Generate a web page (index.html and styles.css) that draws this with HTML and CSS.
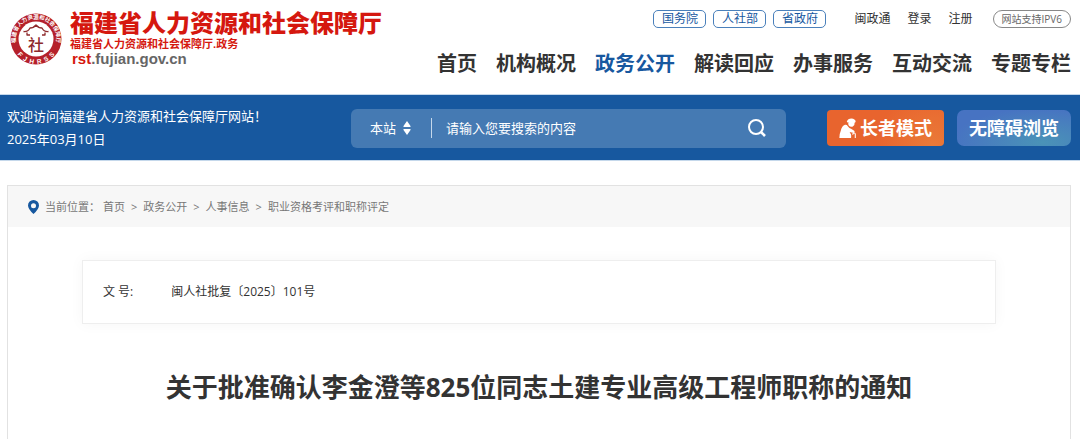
FILE: index.html
```html
<!DOCTYPE html>
<html lang="zh-CN">
<head>
    <meta charset="utf-8">
    <meta name="viewport" content="width=device-width, initial-scale=1">
    <title>福建省人力资源和社会保障厅</title>
    <link rel="stylesheet" href="styles.css">
</head>
<body>
<header class="header">
    <a class="logo" href="#">
        <svg class="logo_seal" viewBox="0 0 104 104" aria-hidden="true">
            <defs>
                <path id="arc_top" d="M15 70 A41 41 0 1 1 89 70"/>
                <path id="arc_bottom" d="M6 56 A46 46 0 0 0 98 56"/>
            </defs>
            <circle cx="52" cy="52" r="51" fill="#b5202a"/>
            <circle cx="52" cy="52" r="35" fill="#fff"/>
            <text class="seal_cn"><textPath href="#arc_top" startOffset="50%">福建省人力资源和社会保障厅</textPath></text>
            <text class="seal_en"><textPath href="#arc_bottom" startOffset="50%">F&nbsp; J&nbsp; H&nbsp; R&nbsp; S&nbsp; S</textPath></text>
            <path d="M27 37 Q36 38 40 30 Q47 30 52 24 Q57 30 64 30 Q68 38 77 37 M34 39 V44 H40 M70 39 V44 H64" fill="none" stroke="#8e2a2c" stroke-width="2.6" stroke-linejoin="round"/>
            <text class="seal_mid" x="52" y="75">社</text>
        </svg>
        <span class="logo_text">
            <strong class="logo_name">福建省人力资源和社会保障厅</strong>
            <span class="logo_sub">福建省人力资源和社会保障厅.政务</span>
            <span class="logo_url"><em>rst</em>.fujian.gov.cn</span>
        </span>
    </a>
    <div class="header_right">
        <div class="toplinks">
            <div class="gov">
                <a href="#">国务院</a>
                <a href="#">人社部</a>
                <a href="#">省政府</a>
            </div>
            <div class="user">
                <a href="#">闽政通</a>
                <a href="#">登录</a>
                <a href="#">注册</a>
            </div>
            <a class="ipv6" href="#">网站支持IPV6</a>
        </div>
        <nav class="nav">
            <a href="#">首页</a>
            <a href="#">机构概况</a>
            <a class="current" href="#">政务公开</a>
            <a href="#">解读回应</a>
            <a href="#">办事服务</a>
            <a href="#">互动交流</a>
            <a href="#">专题专栏</a>
        </nav>
    </div>
</header>

<section class="banner">
    <div class="welcome">
        <p>欢迎访问福建省人力资源和社会保障厅网站！</p>
        <p>2025年03月10日</p>
    </div>
    <form class="search">
        <span class="scope">
            <select aria-label="搜索范围">
                <option>本站</option>
            </select>
            <svg viewBox="0 0 8 14" aria-hidden="true"><path d="M4 0 L7.5 5 Q8 6 7 6 H1 Q0 6 .5 5 Z M4 14 L.5 9 Q0 8 1 8 H7 Q8 8 7.5 9 Z" fill="#fff"/></svg>
        </span>
        <input class="keyword" type="text" aria-label="搜索内容" placeholder="请输入您要搜索的内容">
        <button class="search_btn" type="button" aria-label="搜索">
            <svg viewBox="0 0 20 20" aria-hidden="true"><circle cx="9" cy="9" r="7" fill="none" stroke="#fff" stroke-width="2"/><path d="M14 14 L18 18" stroke="#fff" stroke-width="2.6"/></svg>
        </button>
    </form>
    <div class="modes">
        <button class="elder" type="button">
            <svg viewBox="0 0 48 56" aria-hidden="true">
                <path d="M22 10 Q25 1 35 1 Q46 2 47 9 Q47 13 44 13 Q45 21 39 24 Q31 26 27 20 Q25 16 27 12 Q23 13 22 10 Z" fill="#fff"/>
                <path d="M17 19 Q22 18 25 23 Q29 29 34 30 L43 36 Q46 39 42 42 L30 39 L34 46 Q35 50 34 56 H1 Q1 45 5 36 Q8 22 17 19 Z" fill="#fff"/>
                <path d="M39 47 V44 Q45 40 46 45 V56" fill="none" stroke="#fff" stroke-width="3"/>
            </svg>
            长者模式
        </button>
        <button class="barrier" type="button">无障碍浏览</button>
    </div>
</section>

<main class="main">
    <div class="crumbs">
        <svg viewBox="0 0 11 14" aria-hidden="true"><path d="M5.5 0 A5.5 5.5 0 0 1 11 5.5 Q11 9 5.5 14 Q0 9 0 5.5 A5.5 5.5 0 0 1 5.5 0 Z M5.5 3.2 A2.5 2.5 0 1 0 5.5 8.2 A2.5 2.5 0 1 0 5.5 3.2 Z" fill="#17589f" fill-rule="evenodd"/></svg>
        <span>当前位置：</span>
        <a href="#">首页</a><i>&gt;</i>
        <a href="#">政务公开</a><i>&gt;</i>
        <a href="#">人事信息</a><i>&gt;</i>
        <a href="#">职业资格考评和职称评定</a>
    </div>
    <article class="article">
        <dl class="info">
            <dt>文 号:</dt>
            <dd>闽人社批复〔2025〕101号</dd>
        </dl>
        <h1>关于批准确认李金澄等825位同志土建专业高级工程师职称的通知</h1>
    </article>
</main>
</body>
</html>
```
FILE: styles.css
```css
*{box-sizing:border-box;}
body,p,h1,dl,dd{margin:0;padding:0;}
body{
    font-family:"Open Sans","Noto Sans CJK SC",sans-serif;
    font-size:12px;line-height:18px;color:#333;background:#fff;
}
a{color:inherit;text-decoration:none;}
em,i{font-style:normal;}
button,input,select{font-family:inherit;border:0;padding:0;margin:0;background:none;}
button{cursor:pointer;}
svg{display:block;flex:none;}

/* 头部 */
.header{
    display:flex;justify-content:space-between;
    padding:8px 9px 15px 10px;
}
.logo{display:flex;align-items:flex-start;gap:8px;}
.logo_seal{width:52px;height:52px;margin-top:5px;}
.seal_cn,.seal_en,.seal_mid{text-anchor:middle;fill:#fff;font-weight:700;}
.seal_cn{font-size:11px;}
.seal_en{font-family:"Liberation Sans",sans-serif;font-size:13px;}
.seal_mid{font-size:32px;font-weight:500;fill:#8e2a2c;}
.logo_text{display:flex;flex-direction:column;color:#d5180f;white-space:nowrap;}
.logo_name{font-size:24px;line-height:29px;font-weight:900;}
.logo_sub{font-size:11px;line-height:14px;font-weight:700;}
.logo_url{
    padding-left:2px;
    font:bold 15px/16px "Liberation Sans",sans-serif;color:#666;
}
.logo_url em{color:#d5180f;}

.header_right{display:flex;flex-direction:column;align-items:flex-end;gap:21px;padding-top:2px;}
.toplinks{display:flex;color:#333;white-space:nowrap;}
.gov{display:flex;gap:7px;margin-right:28px;}
.gov a{
    width:53px;height:18px;line-height:16px;text-align:center;
    color:#17589f;border:1px solid #4a80bb;border-radius:5px;
}
.user{display:flex;gap:17px;line-height:17px;margin-right:20px;}
.ipv6{
    height:18px;line-height:17px;padding:0 8px;
    font-size:10px;color:#666;border:1px solid #888;border-radius:9px;
}
.nav{display:flex;gap:19px;font-size:20px;line-height:30px;font-weight:700;white-space:nowrap;}
.nav .current{color:#17589f;}

/* 蓝色搜索条 */
.banner{
    display:grid;grid-template-columns:344px minmax(0,1fr) auto;align-items:center;
    padding:10px 9px 9px 7px;
    background:#17589f;border-top:1px solid #c5d8eb;border-bottom:1px solid #c5d8eb;
}
.welcome{font-size:13px;line-height:23px;color:#fff;white-space:nowrap;}
.search{
    display:flex;align-items:center;height:39px;
    background:#457ab3;border-radius:6px;color:#fff;
}
.scope{display:flex;align-items:center;gap:6px;padding-left:19px;}
.scope select{appearance:none;font-size:13px;color:#fff;}
.scope svg{width:8px;height:14px;}
.keyword{
    flex:1;min-width:0;height:20px;margin-left:20px;padding-left:14px;
    font-size:13px;color:#fff;border-left:1px solid #c5d8eb;outline:0;
}
.keyword::placeholder{color:#fff;opacity:1;}
.search_btn{padding:0 19px;}
.search_btn svg{width:20px;height:20px;}
.modes{display:flex;gap:13px;margin-left:41px;}
.modes button{
    display:flex;align-items:center;justify-content:center;gap:4px;
    height:36px;padding:0 12px;
    font-size:18px;line-height:26px;font-weight:700;color:#fff;white-space:nowrap;
}
.modes svg{width:17px;height:20px;}
.modes .elder{background:radial-gradient(circle at 90% 100%,#ea7a38,#e8642e 50%);border-radius:4px;}
.modes .barrier{background:radial-gradient(ellipse at 75% 90%,#4a93b7,#4773c2 75%);border-radius:7px;}

/* 正文 */
.main{margin:24px 9px 0 7px;border:1px solid #e2e2e2;border-bottom:0;}
.crumbs{
    display:flex;align-items:center;height:41px;padding-left:20px;
    font-size:11px;color:#777;background:#f7f7f7;white-space:nowrap;
}
.crumbs svg{width:11px;height:14px;margin-right:6px;}
.crumbs span{margin-right:3px;}
.crumbs i{margin:0 6px;}
.article{padding:33px 74px;}
.info{
    display:flex;gap:38px;padding:22px 20px;
    border:1px solid #eee;box-shadow:0 0 14px rgba(0,0,0,.04);
}
.article h1{
    margin-top:44px;
    font-size:26px;line-height:38px;font-weight:700;text-align:center;
}
```
